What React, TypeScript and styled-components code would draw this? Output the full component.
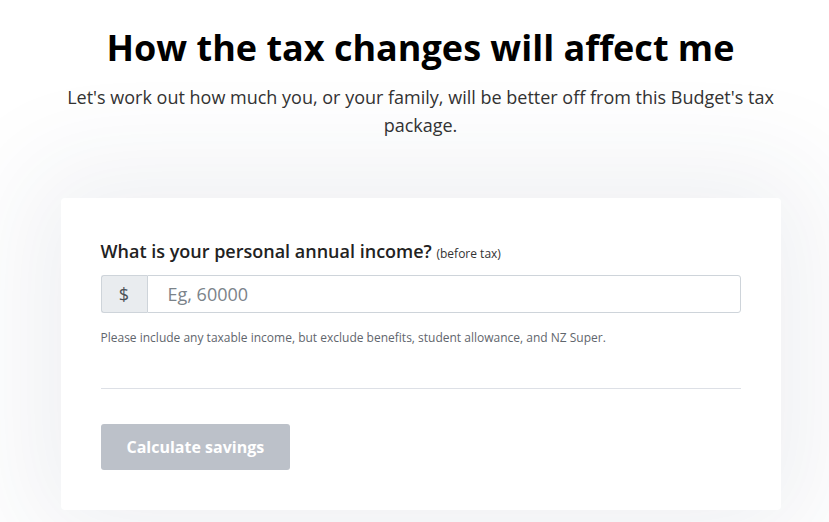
import React from "react";
import styled, { createGlobalStyle } from "styled-components";

const GlobalStyle = createGlobalStyle`
    body {
        margin: 0;
        background: #fff;
        font-family: "Open Sans", "Noto Sans", sans-serif;
        color: #222;
    }
`;

const Page = styled.div`
    display: flex;
    flex-direction: column;
    align-items: center;
    padding: 24px 0 0 12px;
    overflow: hidden;
    height: 522px;
    box-sizing: border-box;
`;

const Title = styled.h1`
    margin: 0;
    font-size: 36px;
    font-weight: 700;
    line-height: 48px;
    color: #000;
    text-align: center;
`;

const Lead = styled.p`
    margin: 11px 0 0;
    width: 720px;
    font-size: 18px;
    line-height: 28px;
    color: #333;
    text-align: center;
`;

const Card = styled.div`
    margin-top: 59px;
    width: 720px;
    box-sizing: border-box;
    padding: 40px;
    background: #fff;
    border-radius: 4px;
    box-shadow: 0 0 110px 30px rgba(40, 55, 90, 0.075);
`;

const Label = styled.label`
    display: block;
    font-size: 18px;
    font-weight: 600;
    line-height: 26px;
    color: #222;
`;

const Small = styled.small`
    font-size: 12px;
    font-weight: 400;
    color: #333;
`;

const InputGroup = styled.div`
    display: flex;
    margin-top: 8px;
    height: 38px;
`;

const Addon = styled.span`
    display: flex;
    align-items: center;
    justify-content: center;
    width: 46px;
    box-sizing: border-box;
    background: #e9ecef;
    border: 1px solid #ced4da;
    border-right: 0;
    border-radius: 3px 0 0 3px;
    font-size: 18px;
    color: #495057;
`;

const Input = styled.input`
    flex: 1;
    min-width: 0;
    box-sizing: border-box;
    border: 1px solid #ced4da;
    border-radius: 0 3px 3px 0;
    padding: 0 20px;
    font-family: inherit;
    font-size: 18px;
    color: #495057;
    outline: none;

    &::placeholder {
        color: #7b838a;
    }
`;

const Help = styled.p`
    margin: 16px 0 0;
    font-size: 12px;
    line-height: 18px;
    color: #5f666d;
`;

const Divider = styled.hr`
    margin: 41px 0 35px;
    border: 0;
    border-top: 1px solid #dde0e6;
`;

const Button = styled.button`
    display: block;
    height: 46px;
    padding: 0 26px;
    border: 0;
    border-radius: 3px;
    background: #bcc1c9;
    color: #fff;
    font-family: inherit;
    font-size: 16px;
    font-weight: 700;
    cursor: default;
`;

export default function App() {
    return (
        <>
            <GlobalStyle />
            <Page>
                <Title>How the tax changes will affect me</Title>
                <Lead>
                    Let's work out how much you, or your family, will be better off from this Budget's tax package.
                </Lead>
                <Card>
                    <Label htmlFor="income">
                        What is your personal annual income? <Small>(before tax)</Small>
                    </Label>
                    <InputGroup>
                        <Addon>$</Addon>
                        <Input id="income" placeholder="Eg, 60000" />
                    </InputGroup>
                    <Help>Please include any taxable income, but exclude benefits, student allowance, and NZ Super.</Help>
                    <Divider />
                    <Button disabled>Calculate savings</Button>
                </Card>
            </Page>
        </>
    );
}
